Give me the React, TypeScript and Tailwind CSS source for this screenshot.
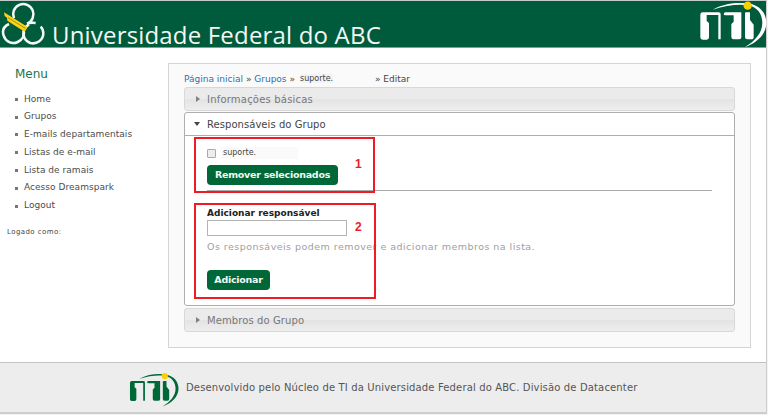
function NtiLogo({ className, color }: { className: string; color: string }) {
  return (
    <svg className={className} viewBox="93 0 204 144" preserveAspectRatio="none" fill={color}>
      <path d="M134 29 C170 8 215 6 246 11 C278 17 295 42 295 68 C295 102 268 128 230 142 C262 122 283 98 283 68 C283 42 268 21 240 16 C210 12 174 16 134 29 Z" />
      <path d="M104 37 H152 Q158 37 158 43 V118 H151 V45 H116 V63 L123 69 V112 Q123 119 116 119 H104 Q97 119 97 112 V45 Q97 37 104 37 Z" />
      <path d="M173 37 H220 V112 Q220 118 214 118 H197 Q190 118 190 111 V72 L197 65 V46 H173 Q167 46 167 42 Q167 37 173 37 Z" />
      <path d="M234 37 H246 V60 L257 74 V110 Q257 118 250 118 H238 Q231 118 231 111 V39 Q231 37 234 37 Z" />
      <circle cx="239" cy="17" r="12.5" fill="#ffd000" />
    </svg>
  );
}

function UfabcLogo() {
  return (
    <svg className="h-[47px] w-[48px] shrink-0" viewBox="0 3 144 141" fill="none">
      <g stroke="#f4faf7" strokeWidth="7.500">
        <path d="M42 55 A30.500 30.500 0 1 1 81 71 Q92 67 107 69" />
        <path d="M27 72 C12 79 6 92 11 107 C17 126 36 134 53 126 C68 119 74 105 71 92" />
        <path d="M71 92 C67 108 75 124 91 129 C111 134 130 120 130 100 Q130 88 122 80" />
        <path d="M71 92 Q75 80 87 73" />
      </g>
      <path d="M12 37 L83 81 L74 95 L22 62 L21 53 L14 48 Z" fill="#fcd116" />
      <path d="M24 53 L76 85" stroke="#786f12" strokeWidth="2" />
    </svg>
  );
}

const menu = [
  "Home",
  "Grupos",
  "E-mails departamentais",
  "Listas de e-mail",
  "Lista de ramais",
  "Acesso Dreamspark",
  "Logout",
];

function Bar({ title, className }: { title: string; className: string }) {
  return (
    <div className={`flex h-[24px] items-center rounded-[3px] border border-[#d8d8d8] bg-linear-to-b from-[#ebebeb] from-48% via-[#e3e3e3] via-50% to-[#eeeeee] pl-[11px] text-[10px] text-[#777] ${className}`}>
      <svg className="mr-[7px] h-[6px] w-[4px]" viewBox="0 0 4 6" fill="#808080"><path d="M0 0 L4 3 L0 6Z" /></svg>
      <span>{title}</span>
    </div>
  );
}

export default function App() {
  return (
    <div className="flex h-[415px] w-[768px] flex-col overflow-hidden bg-[#f4f4f4] font-['DejaVu_Sans','Liberation_Sans',sans-serif] whitespace-nowrap">
      <div className="flex h-[414px] w-[767px] flex-col border-r border-b-2 border-[#cdcdcd] bg-white">
        <header className="flex h-[48px] shrink-0 border-t border-b border-t-[#c4ccc8] border-b-[#75a594] bg-[#005b3c]">
          <UfabcLogo />
          <h1 className="ml-[4px] w-[334px] pt-[17px] font-['Open_Sans',sans-serif] text-[24px] leading-[34px] font-medium tracking-[0.18px] text-[#f3f8f5]">Universidade Federal do ABC</h1>
          <NtiLogo className="-mt-px -mr-px ml-auto h-[48px] w-[68px]" color="#fff" />
        </header>
        <main className="flex h-[314px] shrink-0">
          <nav className="w-[168px] shrink-0">
            <h2 className="mt-[17px] ml-[15px] text-[12px] leading-[18px] text-[#1c7450]">Menu</h2>
            <ul className="mt-[7.5px] text-[9px] leading-[17.8px] tracking-[0.04px] text-[#4c4c4c]">
              {menu.map((label) => (
                <li key={label} className="flex h-[17.8px] items-center pl-[15px]">
                  <span className="mr-[6px] h-[3px] w-[3px] bg-[#777]" />
                  <span>{label}</span>
                </li>
              ))}
            </ul>
            <p className="mt-[11px] ml-[7px] text-[7px] leading-[12px] tracking-[0.42px] text-[#444]">Logado como:</p>
          </nav>
          <section className="mt-[15px] h-[285px] w-[583px] border border-[#d5d5d5] bg-[#fafafa] px-[15px] pt-[8px]">
            <div className="flex h-[14px] text-[9px] leading-[14px] text-[#444]">
              <span className="w-[116px]"><span className="text-[#2872b4]">Página inicial</span> » <span className="text-[#2872b4]">Grupos</span> »</span>
              <span className="w-[75px] text-[8px]"><span className="bg-[#f3f3f3]">suporte.</span></span>
              <span>» Editar</span>
            </div>
            <Bar title="Informações básicas" className="mt-px tracking-[0.2px]" />
            <div className="mt-px h-[194px] rounded-[3px] border border-[#aeaeae] bg-white">
              <div className="flex h-[23px] items-center border-b border-[#aeaeae] pl-[9px] text-[10px] tracking-[0.05px] text-[#444]">
                <svg className="mr-[7px] h-[4px] w-[6px]" viewBox="0 0 6 4" fill="#444"><path d="M0 0H6L3 4Z" /></svg>
                <span>Responsáveis do Grupo</span>
              </div>
              <div className="relative px-[22px] pt-[11px]">
                <div className="flex h-[12px] items-center text-[8px] text-[#444]">
                  <span className="h-[9px] w-[9px] rounded-[1px] border border-[#aaa] bg-[#ededed]" />
                  <span className="ml-[5px] flex h-[12px] w-[77px] items-center bg-[#fafafa] pl-[2px]">suporte.</span>
                </div>
                <button className="mt-[6px] block h-[20px] w-[131px] rounded-[4px] bg-[#006838] pt-px text-[9.5px] font-bold tracking-[-0.25px] text-[#f1f8f3]">Remover selecionados</button>
                <div className="mt-[5px] h-px w-[505px] bg-[#aaa]" />
                <p className="mt-[16px] text-[9px] leading-[13px] font-bold text-[#222]">Adicionar responsável</p>
                <input className="block h-[16px] w-[140px] border border-[#b4b4b4] bg-white" aria-label="Adicionar responsável" />
                <p className="mt-[4px] text-[9.5px] leading-[14px] tracking-[0.46px] text-[#a0a0a0]">Os responsáveis podem remover e adicionar membros na lista.</p>
                <button className="mt-[16px] block h-[20px] w-[63px] rounded-[4px] bg-[#006838] pt-px text-[9.5px] font-bold tracking-[-0.25px] text-[#f1f8f3]">Adicionar</button>
                <div className="absolute top-px left-[9px] h-[56px] w-[181px] border-2 border-[#ed1c24]" />
                <div className="absolute top-[67px] left-[9px] h-[96px] w-[182px] border-2 border-[#ed1c24]" />
                <span className="absolute top-[21px] left-[170px] font-['Liberation_Sans',sans-serif] text-[12px] leading-[14px] font-bold text-[#ed1c24]">1</span>
                <span className="absolute top-[84px] left-[170px] font-['Liberation_Sans',sans-serif] text-[12px] leading-[14px] font-bold text-[#ed1c24]">2</span>
              </div>
            </div>
            <Bar title="Membros do Grupo" className="mt-[2px] tracking-[0.1px]" />
          </section>
        </main>
        <footer className="flex flex-1 border-t border-[#c3c3c3] bg-[#ededed] pl-[129px]">
          <NtiLogo className="mt-[9px] h-[35px] w-[50px]" color="#006838" />
          <p className="ml-[7px] pt-[17px] text-[10px] leading-[16px] tracking-[0.145px] text-[#555]">Desenvolvido pelo Núcleo de TI da Universidade Federal do ABC. Divisão de Datacenter</p>
        </footer>
      </div>
    </div>
  );
}
